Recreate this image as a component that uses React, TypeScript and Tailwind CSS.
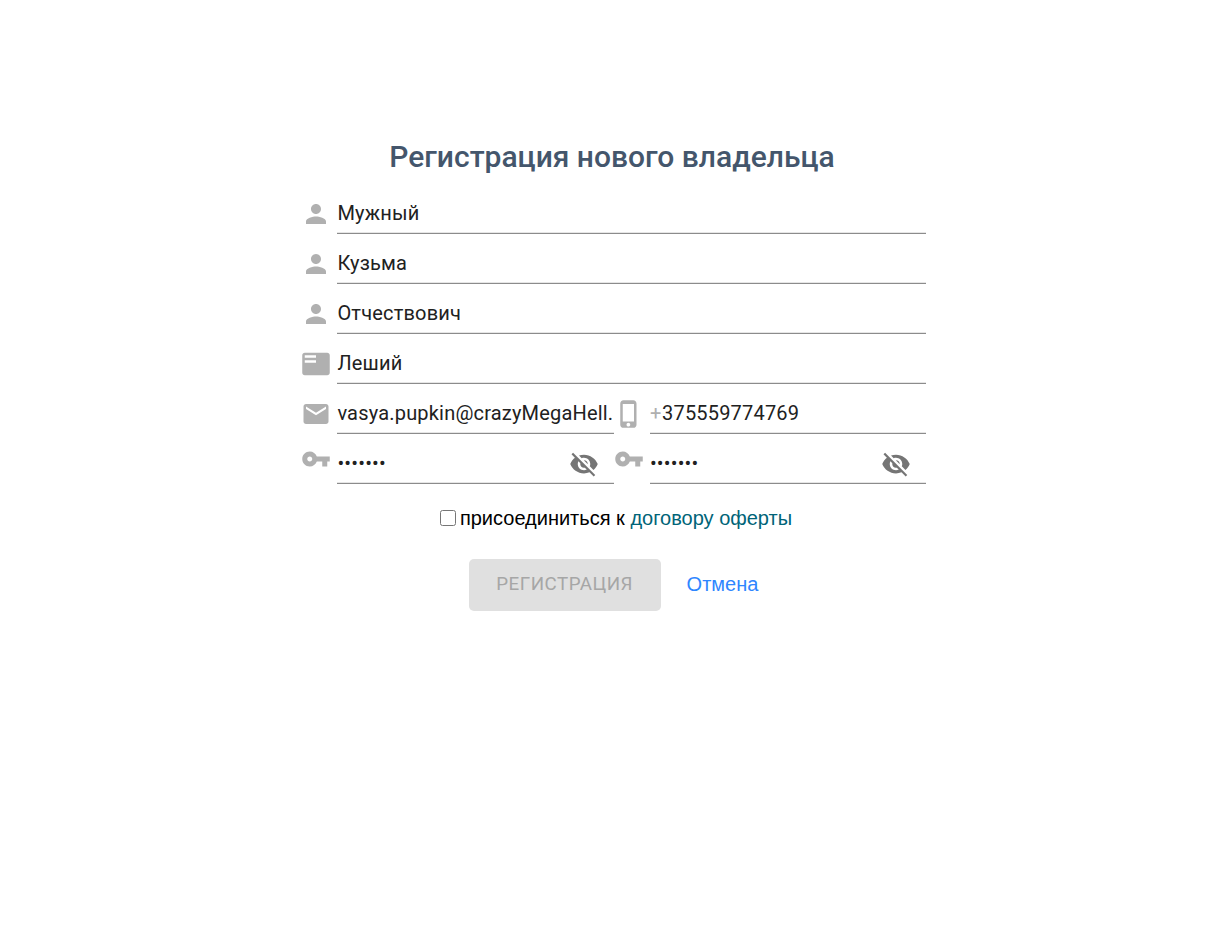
import { useState } from "react";

const PERSON = "M12 12c2.21 0 4-1.79 4-4s-1.79-4-4-4-4 1.79-4 4 1.79 4 4 4zm0 2c-2.67 0-8 1.34-8 4v2h16v-2c0-2.66-5.33-4-8-4z";
const MAIL = "M20 4H4c-1.1 0-1.99.9-1.99 2L2 18c0 1.1.9 2 2 2h16c1.1 0 2-.9 2-2V6c0-1.1-.9-2-2-2zm0 4l-8 5-8-5V6l8 5 8-5v2z";
const FEATURED = "M21 3H3c-1.1 0-2 .9-2 2v14c0 1.1.9 2 2 2h18c1.1 0 2-.9 2-2V5c0-1.1-.9-2-2-2zm-9 8H3V9h9v2zm0-4H3V5h9v2z";
const PHONE = "M15.5 1h-8C6.12 1 5 2.12 5 3.5v17C5 21.88 6.12 23 7.5 23h8c1.38 0 2.5-1.12 2.5-2.5v-17C18 2.12 16.88 1 15.5 1zm-4 21c-.83 0-1.5-.67-1.5-1.5s.67-1.5 1.5-1.5 1.5.67 1.5 1.5-.67 1.5-1.5 1.5zm4.500-4H7V4h9v14z";
const KEY = "M12.65 10C11.83 7.67 9.61 6 7 6c-3.31 0-6 2.69-6 6s2.690 6 6 6c2.610 0 4.830-1.670 5.650-4H17v4h4v-4h2v-4H12.65zM7 14c-1.100 0-2-.9-2-2s.9-2 2-2 2 .9 2 2-.9 2-2 2z";
const EYE_OFF = "M12 7c2.760 0 5 2.240 5 5 0 .65-.13 1.260-.36 1.830l2.920 2.920c1.510-1.260 2.700-2.890 3.430-4.750-1.730-4.390-6-7.500-11-7.500-1.400 0-2.740.25-3.980.7l2.160 2.160C10.740 7.130 11.350 7 12 7zM2 4.270l2.280 2.280.46.46C3.080 8.300 1.780 10.020 1 12c1.730 4.390 6 7.500 11 7.500 1.550 0 3.030-.3 4.380-.84l.42.42L19.730 22 21 20.730 3.270 3 2 4.270zM7.530 9.800l1.550 1.550c-.05.21-.08.43-.08.65 0 1.660 1.340 3 3 3 .22 0 .44-.03.65-.08l1.550 1.550c-.67.33-1.410.53-2.200.53-2.760 0-5-2.240-5-5 0-.79.2-1.530.53-2.200zm4.310-.78l3.150 3.150.02-.16c0-1.660-1.340-3-3-3l-.17.010z";

function Icon({ d, className = "" }: { d: string; className?: string }) {
  return (
    <svg viewBox="0 0 24 24" className={`size-[30px] shrink-0 fill-current ${className}`}>
      <path d={d} />
    </svg>
  );
}

interface FieldProps {
  icon: string;
  value: string;
  secret?: boolean;
  prefix?: string;
}

function Field({ icon, value, secret, prefix }: FieldProps) {
  return (
    <div className="flex h-[50px] w-full min-w-0">
      <div className={`w-[36px] shrink-0 text-[#b0b0b0] ${icon === KEY ? "pt-0.5" : "pt-[7px]"}`}>
        <Icon d={icon} />
      </div>
      <div className="flex h-[42px] min-w-0 flex-1 items-center border-b border-[#8c8c8c] pl-[0.4px] text-[20px] tracking-[0.1875px] text-[#212121] shadow-[inset_0_-1px_0_#e6e6e6]">
        {prefix && <span className="pr-[0.6px] text-[#b0b0b0]">{prefix}</span>}
        <span className="whitespace-nowrap">{value}</span>
        {secret && <Icon d={EYE_OFF} className="mt-0.5 mr-[15px] ml-auto text-[#757575]" />}
      </div>
    </div>
  );
}

export default function App() {
  const [accepted, setAccepted] = useState(false);
  return (
    <main className="flex min-h-screen justify-center bg-white pt-[137px] font-['Roboto',sans-serif]">
      <form className="flex w-[625px] flex-col items-center" onSubmit={(e) => e.preventDefault()}>
        <h1 className="h-[55px] pr-[3px] text-[30px] leading-[40px] font-medium text-[#44566c]">Регистрация нового владельца</h1>
        <div className="flex w-full flex-col">
          <Field icon={PERSON} value="Мужный" />
          <Field icon={PERSON} value="Кузьма" />
          <Field icon={PERSON} value="Отчествович" />
          <Field icon={FEATURED} value="Леший" />
          <div className="flex">
            <Field icon={MAIL} value="vasya.pupkin@crazyMegaHell." />
            <Field icon={PHONE} value="375559774769" prefix="+" />
          </div>
          <div className="flex">
            <Field icon={KEY} value="•••••••" secret />
            <Field icon={KEY} value="•••••••" secret />
          </div>
        </div>
        <label className="mt-3 flex h-[28px] items-center gap-1 pl-[5px] font-['Liberation_Sans',sans-serif] text-[20px] text-black">
          <input type="checkbox" className="size-4" checked={accepted} onChange={() => setAccepted(!accepted)} />
          <span>присоединиться к <a className="text-[#006478]">договору оферты</a></span>
        </label>
        <div className="mt-[27px] flex items-center gap-[26px]">
          <button disabled className="h-[52px] w-[192px] rounded-[5px] bg-[#e0e0e0] pb-px text-[18.75px] tracking-[0.5px] text-[#a6a6a6]">РЕГИСТРАЦИЯ</button>
          <a className="pb-0.5 font-['Liberation_Sans',sans-serif] text-[20px] text-[#2e86ff]">Отмена</a>
        </div>
      </form>
    </main>
  );
}
